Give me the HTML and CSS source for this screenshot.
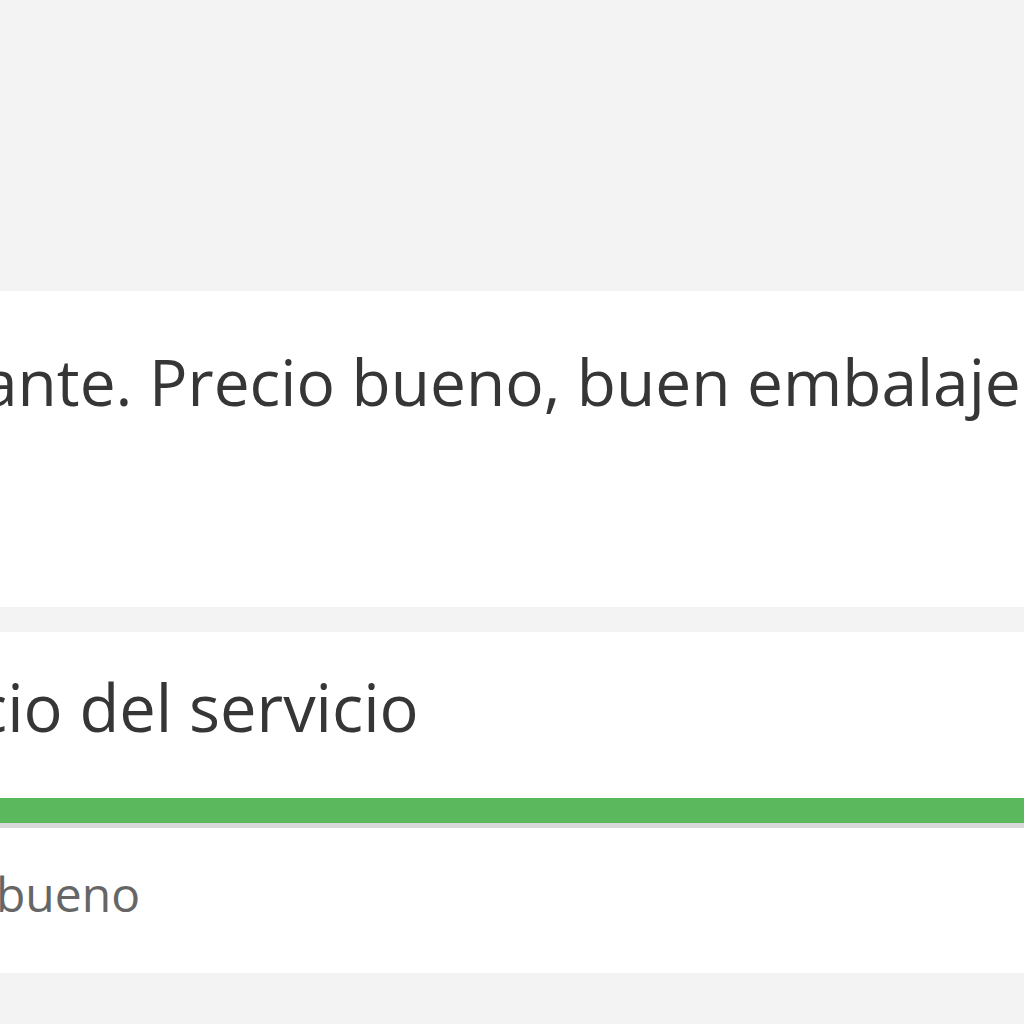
FILE: index.html
```html
<!doctype html>
<html lang="es">
    <head>
        <meta charset="utf-8">
        <title>Opiniones</title>
        <link rel="stylesheet" href="styles.css">
    </head>
    <body>
        <div class="page">
            <section class="card review">
                <p class="review-text">ante. Precio bueno, buen embalaje</p>
            </section>

            <section class="card rating">
                <h2 class="rating-title">cio del servicio</h2>
                <div class="progress">
                    <div class="progress-bar" style="width:100%"></div>
                </div>
                <p class="rating-label">bueno</p>
            </section>
        </div>
    </body>
</html>
```

FILE: styles.css
```css
body {
    margin: 0;
    background: #f3f3f3;
    font-family: "Open Sans", "Liberation Sans", sans-serif;
    color: #363636;
}
.page {
    /* empty grey band above the first card */
    padding-top: 291px;
    overflow: hidden;
}
.card {
    background: #fff;
    white-space: nowrap;
}
.review {
    height: 316px;
    padding-top: 48px;
    box-sizing: border-box;
}
.review-text {
    margin: 0 0 0 -18px;
    font-size: 64px;
    line-height: 86px;
}
.rating {
    margin-top: 25px;
    padding: 32px 0 48px;
}
.rating-title {
    margin: 0 0 0 -24px;
    font-size: 65px;
    font-weight: normal;
    line-height: 86px;
}
.progress {
    margin-top: 48px;
    height: 25px;
    border-bottom: 5px solid #d9d9d9;
    background: #e9e9e9;
}
.progress-bar {
    height: 100%;
    background: #5cb85c;
}
.rating-label {
    margin: 34px 0 0 -4px;
    font-size: 48px;
    line-height: 63px;
    color: #666;
}
```
